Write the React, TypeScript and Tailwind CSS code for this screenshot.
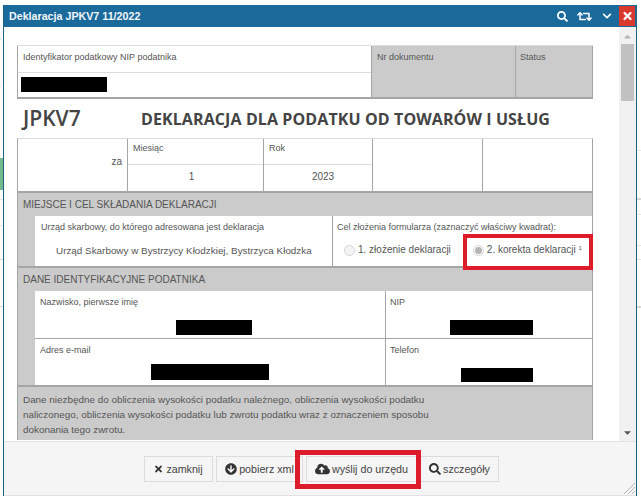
import React from 'react';
import { FaSearch, FaRetweet, FaChevronDown, FaTimes, FaArrowCircleDown, FaCloudUploadAlt, FaCaretUp, FaCaretDown } from 'react-icons/fa';

const Label: React.FC<{ children: React.ReactNode; className?: string }> = ({ children, className = '' }) => (
  <div className={`text-[9px] leading-[12px] text-[#555] ${className}`}>{children}</div>
);

const Redacted: React.FC<{ className: string }> = ({ className }) => <div className={`bg-black ${className}`} />;

const FooterButton: React.FC<{ icon: React.ReactNode; label: string; className: string }> = ({ icon, label, className }) => (
  <div className={`h-[26px] flex items-center justify-center gap-[2px] border border-[#dcdcdc] bg-[#f5f5f5] text-[10.7px] text-[#444] ${className}`}>
    {icon}
    <span>{label}</span>
  </div>
);

const App: React.FC = () => {
  return (
    <div className="relative w-[641px] h-[497px] overflow-hidden bg-white flex font-['Liberation_Sans',Arial,sans-serif]">
      {/* page behind the window */}
      <div className="w-[3px] shrink-0 pt-[31px] text-[11px] leading-[12px] text-[#666] overflow-hidden">
        <div className="ml-[-5px]">s</div>
        <div className="ml-[-5px] mt-[35px]">c</div>
        <div className="h-[68px]" />
        <div className="h-[32px] bg-[#6fb98a]" />
        <div className="mt-[9px] h-px bg-[#e4e4e4]" />
        <div className="mt-[25px] h-px bg-[#e4e4e4]" />
        <div className="mt-[33px] h-px bg-[#d8d8d8]" />
        <div className="mt-[46px] h-px bg-[#d8d8d8]" />
      </div>

      {/* window */}
      <div className="mt-[5px] w-[634px] h-[491px] shrink-0 flex flex-col border-x border-[#1f5f7f] bg-white">
        <div className="h-[22px] shrink-0 flex items-center bg-[#1b6a9c] pl-[5px] pr-px">
          <span className="text-[10.7px] font-bold text-[#f2f7fa]">Deklaracja JPKV7 11/2022</span>
          <div className="ml-auto flex items-center text-white">
            <FaSearch className="w-[11px] h-[11px]" />
            <FaRetweet className="ml-[9px] w-[15px] h-[13px]" />
            <FaChevronDown className="ml-[10px] w-[10px] h-[10px]" />
            <div className="ml-[7px] w-[16px] h-[20px] bg-[#d9392c] flex items-center justify-center">
              <FaTimes className="w-[11px] h-[12px]" />
            </div>
          </div>
        </div>

        <div className="h-[414px] shrink-0 flex overflow-hidden">
          <div className="w-[615px] shrink-0 pt-[18px] pl-[13px] overflow-hidden">
            <div className="w-[576px]">
              {/* naglowek */}
              <div className="h-[54px] flex border-t border-[#dcdcdc] border-b-2 border-b-[#a5a5a5]">
                <div className="w-[354px] shrink-0 flex flex-col border-l border-[#a5a5a5]">
                  <div className="h-[27px] pl-[5px] pt-[5px] border-b border-[#dcdcdc]">
                    <Label>Identyfikator podatkowy NIP podatnika</Label>
                  </div>
                  <div className="pl-[3px] pt-[4px]">
                    <Redacted className="w-[86px] h-[15px]" />
                  </div>
                </div>
                <div className="w-[144px] shrink-0 bg-[#cbcbcb] border-l border-[#a5a5a5] pl-[5px] pt-[5px]">
                  <Label>Nr dokumentu</Label>
                </div>
                <div className="w-[78px] shrink-0 bg-[#cbcbcb] border-x border-[#a5a5a5] pl-[4px] pt-[5px]">
                  <Label>Status</Label>
                </div>
              </div>

              {/* tytul */}
              <div className="h-[39px] flex items-center font-['Open_Sans',sans-serif] text-[#444]">
                <div className="w-[124px] pl-[6px] text-[21px] font-semibold">JPKV7</div>
                <div className="text-[16px] font-bold tracking-[0.1px] whitespace-nowrap">DEKLARACJA DLA PODATKU OD TOWARÓW I USŁUG</div>
              </div>

              {/* okres */}
              <div className="h-[53px] flex border-t border-[#dcdcdc] border-x border-x-[#a5a5a5]">
                <div className="w-[109px] shrink-0 flex items-end justify-end pr-[5px] pb-[22px] text-[10px] text-[#555]">za</div>
                <div className="w-[136px] shrink-0 flex flex-col border-l border-[#a5a5a5]">
                  <div className="h-[26px] pl-[5px] pt-[3px] border-b border-[#dcdcdc]"><Label>Miesiąc</Label></div>
                  <div className="pt-[4px] pr-[8px] text-center text-[10px] text-[#555]">1</div>
                </div>
                <div className="w-[109px] shrink-0 flex flex-col border-l border-[#a5a5a5]">
                  <div className="h-[26px] pl-[5px] pt-[3px] border-b border-[#dcdcdc]"><Label>Rok</Label></div>
                  <div className="pt-[4px] pl-[10px] text-center text-[10px] text-[#555]">2023</div>
                </div>
                <div className="w-[110px] shrink-0 border-l border-[#a5a5a5]" />
                <div className="flex-1 border-l border-[#a5a5a5]" />
              </div>

              {/* miejsce i cel */}
              <div className="bg-[#cbcbcb] border-x border-[#a5a5a5] border-t-2 border-t-[#a5a5a5]">
                <div className="h-[23px] flex items-center pl-[5px] text-[10px] text-[#555]">MIEJSCE I CEL SKŁADANIA DEKLARACJI</div>
                <div className="ml-[17px] h-[50px] flex bg-white">
                  <div className="w-[297px] shrink-0 pl-[6px] pt-[5px]">
                    <Label>Urząd skarbowy, do którego adresowana jest deklaracja</Label>
                    <div className="mt-[12px] pl-[15px] text-[9.9px] leading-[12px] text-[#555] whitespace-nowrap">Urząd Skarbowy w Bystrzycy Kłodzkiej, Bystrzyca Kłodzka</div>
                  </div>
                  <div className="flex-1 border-l border-[#a5a5a5] pl-[4px] pt-[5px]">
                    <Label className="whitespace-nowrap">Cel złożenia formularza (zaznaczyć właściwy kwadrat):</Label>
                    <div className="mt-[11px] flex items-center text-[10px] leading-[12px] text-[#555] whitespace-nowrap">
                      <span className="ml-[7px] w-[11px] h-[11px] rounded-full border border-[#d5d5d5] bg-[#f4f4f4]" />
                      <span className="ml-[3px]">1. złożenie deklaracji</span>
                      <span className="ml-[22px] w-[11px] h-[11px] rounded-full border border-[#d5d5d5] bg-white flex items-center justify-center">
                        <span className="w-[7px] h-[7px] rounded-full bg-[#b5b5b5]" />
                      </span>
                      <span className="ml-[3px]">2. korekta deklaracji <sup className="text-[6px]">1</sup></span>
                    </div>
                  </div>
                </div>
              </div>

              {/* dane identyfikacyjne */}
              <div className="bg-[#cbcbcb] border-x border-[#a5a5a5] border-t-2 border-t-[#a5a5a5]">
                <div className="h-[23px] flex items-center pl-[5px] text-[10px] text-[#555]">DANE IDENTYFIKACYJNE PODATNIKA</div>
                <div className="ml-[17px] h-[48px] flex bg-white border-b border-[#a5a5a5]">
                  <div className="w-[350px] shrink-0 pl-[5px] pt-[5px]">
                    <Label>Nazwisko, pierwsze imię</Label>
                    <Redacted className="mt-[12px] ml-[136px] w-[76px] h-[15px]" />
                  </div>
                  <div className="flex-1 border-l border-[#a5a5a5] pl-[4px] pt-[5px]">
                    <Label>NIP</Label>
                    <Redacted className="mt-[12px] ml-[60px] w-[83px] h-[15px]" />
                  </div>
                </div>
                <div className="ml-[17px] h-[46px] flex bg-white">
                  <div className="w-[350px] shrink-0 pl-[5px] pt-[5px]">
                    <Label>Adres e-mail</Label>
                    <Redacted className="mt-[8px] ml-[111px] w-[118px] h-[16px]" />
                  </div>
                  <div className="flex-1 border-l border-[#a5a5a5] pl-[4px] pt-[5px]">
                    <Label>Telefon</Label>
                    <Redacted className="mt-[12px] ml-[71px] w-[72px] h-[14px]" />
                  </div>
                </div>
              </div>

              {/* informacja */}
              <div className="h-[55px] bg-[#cbcbcb] border-x border-[#a5a5a5] border-t-2 border-t-[#a5a5a5] pl-[5px] pt-[5px] text-[9.9px] leading-[15px] text-[#555]">
                Dane niezbędne do obliczenia wysokości podatku należnego, obliczenia wysokości podatku<br />
                naliczonego, obliczenia wysokości podatku lub zwrotu podatku wraz z oznaczeniem sposobu<br />
                dokonania tego zwrotu.
              </div>
            </div>
          </div>

          {/* scrollbar */}
          <div className="flex-1 flex flex-col items-center bg-[#f1f1f1] text-[#7d7d7d]">
            <FaCaretUp className="mt-[4px] h-[11px] w-[11px] text-[#b5b5b5]" />
            <div className="mt-[2px] w-[13px] h-[57px] bg-[#c1c1c1]" />
            <FaCaretDown className="mt-auto mb-[3px] h-[11px] w-[11px] text-[#555]" />
          </div>
        </div>

        {/* stopka */}
        <div className="relative flex-1 flex justify-center pt-[14px] pl-[4px] bg-[#f5f5f5] border-t border-[#e2e2e2] border-b border-b-[#e2e2e2]">
          <div className="ml-[-1px] flex gap-[3px]">
            <FooterButton icon={<FaTimes className="w-[9px] h-[10px] mr-px text-[#333]" />} label="zamknij" className="w-[69px]" />
            <FooterButton icon={<FaArrowCircleDown className="w-[12px] h-[12px] text-[#333]" />} label="pobierz xml" className="w-[87px]" />
            <FooterButton icon={<FaCloudUploadAlt className="w-[15px] h-[14px] text-[#333]" />} label="wyślij do urzędu" className="w-[111px]" />
            <FooterButton icon={<FaSearch className="w-[12px] h-[12px] text-[#333]" />} label="szczegóły" className="w-[79px]" />
          </div>
          <svg className="absolute right-px bottom-px" width="12" height="12" viewBox="0 0 12 12" stroke="#b5b5b5" strokeWidth="1">
            <path d="M1 12 12 1M5 12l7-7M9 12l3-3" />
          </svg>
        </div>
      </div>

      {/* page behind the window, right side */}
      <div className="flex-1 pt-[150px]">
        <div className="h-px bg-[#e8e8e8]" />
        <div className="mt-[47px] h-[2px] bg-[#d8d8d8]" />
        <div className="mt-[14px] h-px bg-[#e4e4e4]" />
        <div className="mt-[30px] h-px bg-[#e4e4e4]" />
        <div className="mt-[13px] h-px bg-[#e4e4e4]" />
        <div className="mt-[46px] h-[2px] bg-[#d8d8d8]" />
      </div>

      {/* czerwone zaznaczenia */}
      <div className="absolute left-[463px] top-[234px] w-[130px] h-[36px] border-[4px] border-[#dd1c2b]" />
      <div className="absolute left-[295px] top-[450px] w-[126px] h-[39px] border-[5px] border-[#dd1c2b]" />
    </div>
  );
};

export default App;
